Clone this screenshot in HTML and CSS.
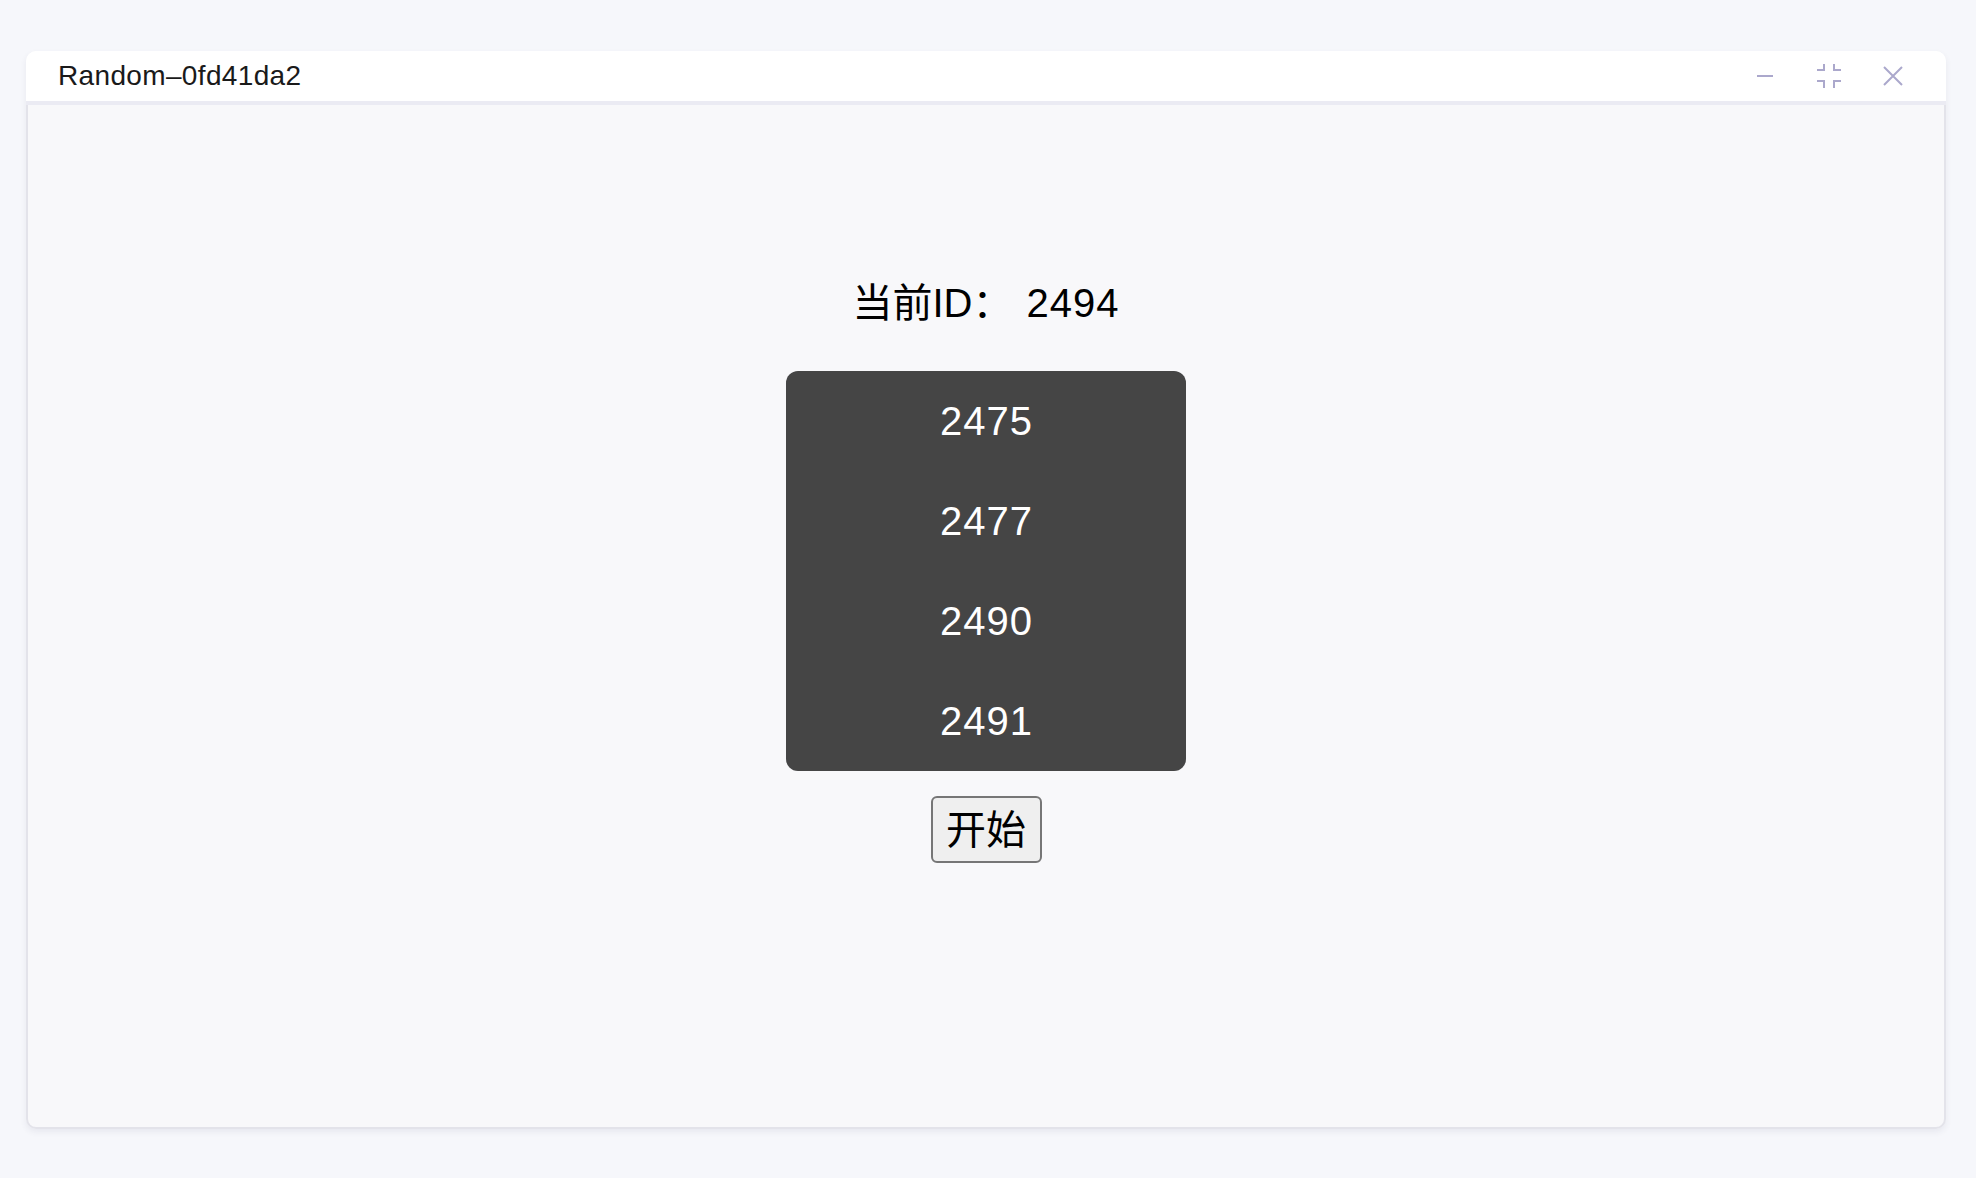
FILE: index.html
```html
<!DOCTYPE html>
<html lang="zh">
<head>
<meta charset="utf-8">
<title>Random</title>
<link rel="stylesheet" href="styles.css">
</head>
<body>
<div class="window">
  <header class="titlebar">
    <span class="title">Random–0fd41da2</span>
    <div class="controls">
      <button class="ctl" aria-label="minimize">
        <svg width="16" height="4" viewBox="0 0 16 4"><path d="M0 2H16" stroke="#aba8cc" stroke-width="2"/></svg>
      </button>
      <button class="ctl" aria-label="restore">
        <svg width="24" height="24" viewBox="0 0 24 24" fill="none" stroke="#aba8cc" stroke-width="2">
          <path d="M0 6H7V0"/>
          <path d="M17 0V6H24"/>
          <path d="M0 17H7V24"/>
          <path d="M24 17H17V24"/>
        </svg>
      </button>
      <button class="ctl" aria-label="close">
        <svg width="20" height="20" viewBox="0 0 20 20" fill="none" stroke="#aba8cc" stroke-width="2"><path d="M1 1L19 19M19 1L1 19"/></svg>
      </button>
    </div>
  </header>
  <main class="content">
    <div class="current">当前ID：<span class="cur-num">2494</span></div>
    <ul class="list">
      <li>2475</li>
      <li>2477</li>
      <li>2490</li>
      <li>2491</li>
    </ul>
    <button class="start">开始</button>
  </main>
</div>
</body>
</html>
```

FILE: styles.css
```css
html, body {
  margin: 0;
  padding: 0;
}
body {
  background: #f6f7fb;
  width: 1976px;
  height: 1178px;
  font-family: "Liberation Sans", "Noto Sans CJK SC", sans-serif;
  padding: 51px 30px 0 26px;
  box-sizing: border-box;
}
.window {
  width: 1920px;
  height: 1078px;
  display: flex;
  flex-direction: column;
  border-radius: 10px;
  background: #f8f8fa;
  box-shadow: 0 3px 6px rgba(60, 60, 100, 0.08);
}
.titlebar {
  height: 50px;
  background: #ffffff;
  border-radius: 10px 10px 0 0;
  border-bottom: 4px solid #ebebf3;
  display: flex;
  align-items: center;
  justify-content: space-between;
  padding: 0 0 0 32px;
  flex-shrink: 0;
}
.title {
  font-size: 28px;
  letter-spacing: 0.35px;
  color: #1a1a1a;
}
.controls {
  display: flex;
  align-items: center;
  margin-right: 43px;
}
.ctl {
  background: none;
  border: 0;
  padding: 0;
  display: flex;
  align-items: center;
  justify-content: center;
  height: 30px;
}
.ctl:nth-child(1) { width: 16px; margin-right: 44px; }
.ctl:nth-child(2) { width: 24px; margin-right: 42px; }
.ctl:nth-child(3) { width: 20px; }
.content {
  flex: 1;
  border: 2px solid #e3e3ea;
  border-top: 0;
  border-radius: 0 0 10px 10px;
  display: flex;
  flex-direction: column;
  align-items: center;
  padding-top: 170px;
}
.current {
  font-size: 40px;
  line-height: 56px;
  color: #000;
  height: 56px;
  margin-bottom: 40px;
}
.cur-num {
  margin-left: 14px;
  letter-spacing: 1px;
}
.list {
  list-style: none;
  margin: 0;
  padding: 0;
  width: 400px;
  height: 400px;
  background: #454545;
  border-radius: 12px;
  display: flex;
  flex-direction: column;
}
.list li {
  height: 100px;
  line-height: 100px;
  text-align: center;
  color: #ffffff;
  font-size: 40px;
  letter-spacing: 1px;
  text-indent: 1px;
}
.start {
  margin-top: 25px;
  width: 111px;
  height: 67px;
  font-family: "Noto Sans CJK SC", sans-serif;
  font-size: 40px;
  line-height: 1;
  color: #000;
  background: #efefef;
  border: 2px solid #767676;
  border-radius: 6px;
  padding: 0 0 5px;
}
```
